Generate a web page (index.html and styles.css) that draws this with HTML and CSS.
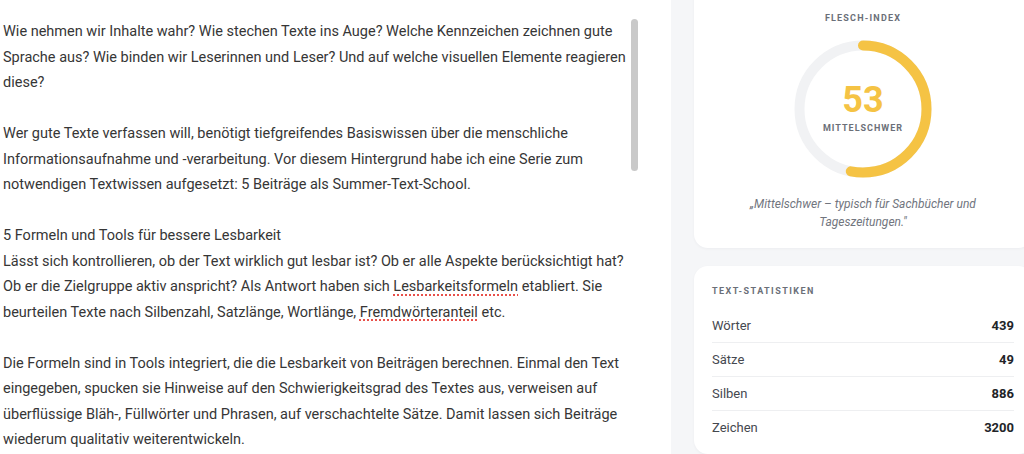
FILE: index.html
```html
<!DOCTYPE html>
<html lang="de">
<head>
<meta charset="utf-8">
<title>Lesbarkeit</title>
<link rel="stylesheet" href="styles.css">
</head>
<body>
<div class="app">
  <main class="editor">
    <div class="text">
      <p>Wie nehmen wir Inhalte wahr? Wie stechen Texte ins Auge? Welche Kennzeichen zeichnen gute<br>Sprache aus? Wie binden wir Leserinnen und Leser? Und auf welche visuellen Elemente reagieren<br>diese?</p>
      <p>Wer gute Texte verfassen will, benötigt tiefgreifendes Basiswissen über die menschliche<br>Informationsaufnahme und -verarbeitung. Vor diesem Hintergrund habe ich eine Serie zum<br>notwendigen Textwissen aufgesetzt: 5 Beiträge als Summer-Text-School.</p>
      <p>5 Formeln und Tools für bessere Lesbarkeit<br>Lässt sich kontrollieren, ob der Text wirklich gut lesbar ist? Ob er alle Aspekte berücksichtigt hat?<br>Ob er die Zielgruppe aktiv anspricht? Als Antwort haben sich <span class="spell">Lesbarkeitsformeln</span> etabliert. Sie<br>beurteilen Texte nach Silbenzahl, Satzlänge, Wortlänge, <span class="spell">Fremdwörteranteil</span> etc.</p>
      <p>Die Formeln sind in Tools integriert, die die Lesbarkeit von Beiträgen berechnen. Einmal den Text<br>eingegeben, spucken sie Hinweise auf den Schwierigkeitsgrad des Textes aus, verweisen auf<br>überflüssige Bläh-, Füllwörter und Phrasen, auf verschachtelte Sätze. Damit lassen sich Beiträge<br>wiederum qualitativ weiterentwickeln.</p>
    </div>
    <div class="thumb"></div>
  </main>
  <aside class="sidebar">
    <section class="card flesch">
      <h2 class="label">FLESCH-INDEX</h2>
      <div class="gauge">
        <svg width="140" height="140" viewBox="0 0 140 140">
          <circle cx="70" cy="70" r="63.5" fill="none" stroke="#f1f2f4" stroke-width="10"/>
          <circle cx="70" cy="70" r="63.5" fill="none" stroke="#f5c344" stroke-width="10" stroke-linecap="round" stroke-dasharray="211.5 400" transform="rotate(-90 70 70)"/>
        </svg>
        <div class="score">
          <div class="num">53</div>
          <div class="level">MITTELSCHWER</div>
        </div>
      </div>
      <p class="quote">„Mittelschwer – typisch für Sachbücher und<br>Tageszeitungen."</p>
    </section>
    <section class="card stats">
      <h2 class="label">TEXT-STATISTIKEN</h2>
      <div class="row"><span>Wörter</span><b>439</b></div>
      <div class="row"><span>Sätze</span><b>49</b></div>
      <div class="row"><span>Silben</span><b>886</b></div>
      <div class="row"><span>Zeichen</span><b>3200</b></div>
    </section>
  </aside>
</div>
</body>
</html>
```
FILE: styles.css
```css
html, body {
  margin: 0;
  padding: 0;
  overflow: hidden;
  background: #ffffff;
}
body {
  font-family: Roboto, "Liberation Sans", sans-serif;
  width: 1024px;
  height: 454px;
}
.app {
  width: 1044px;
  height: 454px;
  display: grid;
  grid-template-columns: 671px 1fr;
}
.editor {
  position: relative;
  background: #ffffff;
  overflow: hidden;
}
.text {
  padding: 19px 0 0 3px;
  font-size: 14.5px;
  line-height: 25.5px;
  color: #363636;
  white-space: nowrap;
}
.text p {
  margin: 0 0 25.5px 0;
}
.spell {
  text-decoration-line: underline;
  text-decoration-style: dotted;
  text-decoration-color: #e8504a;
  text-decoration-thickness: 1.5px;
  text-underline-offset: 3px;
}
.thumb {
  position: absolute;
  left: 631px;
  top: 19px;
  width: 7px;
  height: 152px;
  border-radius: 4px;
  background: #c9c9c9;
}
.sidebar {
  background: #f5f6f8;
  padding: 0 12px 0 23px;
  display: flex;
  flex-direction: column;
  gap: 18px;
}
.card {
  background: #ffffff;
  border-radius: 14px;
  box-shadow: 0 1px 3px rgba(20, 30, 50, 0.04);
}
.label {
  margin: 0;
  font-size: 9px;
  line-height: 12px;
  font-weight: 700;
  letter-spacing: 1.2px;
  color: #6b6f78;
}
.flesch {
  margin-top: -20px;
  padding: 32px 18px 17px;
  display: flex;
  flex-direction: column;
  align-items: center;
}
.gauge {
  margin-top: 15px;
  display: grid;
  place-items: center;
}
.gauge svg, .score {
  grid-area: 1 / 1;
}
.score {
  display: flex;
  flex-direction: column;
  align-items: center;
}
.num {
  font-size: 36px;
  line-height: 40px;
  font-weight: 700;
  color: #f5c344;
  margin-top: -4px;
}
.level {
  font-size: 9px;
  line-height: 12px;
  font-weight: 700;
  letter-spacing: 1px;
  color: #6b6f78;
  margin-top: 2px;
}
.quote {
  margin: 16px 0 0;
  font-size: 12px;
  line-height: 18px;
  font-style: italic;
  color: #71757e;
  text-align: center;
}
.stats {
  padding: 19px 18px 10px;
}
.stats .label {
  letter-spacing: 1.45px;
  margin-bottom: 12px;
}
.row {
  display: flex;
  justify-content: space-between;
  align-items: center;
  height: 33px;
  border-bottom: 1px solid #eeeff1;
  font-size: 13px;
  color: #45484f;
}
.row:last-child {
  border-bottom: none;
}
.row b {
  font-weight: 700;
  color: #222428;
}
```
